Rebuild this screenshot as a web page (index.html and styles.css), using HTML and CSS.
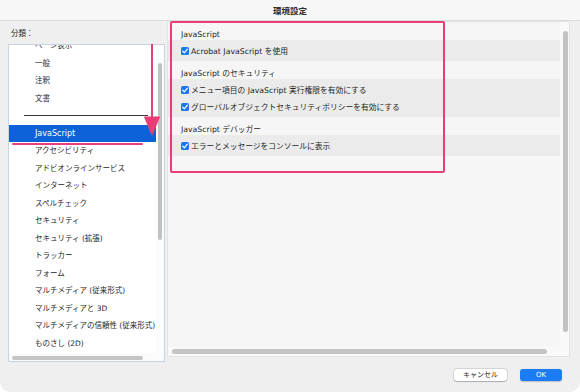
FILE: index.html
```html
<!DOCTYPE html>
<html lang="ja">
<head>
<meta charset="utf-8">
<title>環境設定</title>
<link rel="stylesheet" href="styles.css">
</head>
<body>
<div class="window">
  <div class="titlebar">環境設定</div>
  <div class="main">
    <div class="sidebar">
      <div class="label">分類：</div>
      <div class="listbox">
        <div class="list">
          <div class="item first">ページ表示</div>
          <div class="item">一般</div>
          <div class="item">注釈</div>
          <div class="item">文書</div>
          <div class="sep"><span></span></div>
          <div class="item selected">JavaScript</div>
          <div class="item">アクセシビリティ</div>
          <div class="item">アドビオンラインサービス</div>
          <div class="item">インターネット</div>
          <div class="item">スペルチェック</div>
          <div class="item">セキュリティ</div>
          <div class="item">セキュリティ (拡張)</div>
          <div class="item">トラッカー</div>
          <div class="item">フォーム</div>
          <div class="item">マルチメディア (従来形式)</div>
          <div class="item">マルチメディアと 3D</div>
          <div class="item">マルチメディアの信頼性 (従来形式)</div>
          <div class="item">ものさし (2D)</div>
        </div>
        <div class="list-vtrack"><div class="list-vthumb"></div></div>
        <div class="list-htrack"><div class="list-hthumb"></div></div>
      </div>
    </div>
    <div class="panel">
      <div class="content">
        <div class="heading">JavaScript</div>
        <div class="band">
          <div class="option"><svg class="check" viewBox="0 0 8 8"><rect width="8" height="8" rx="1.6" fill="#1f75ee"/><path d="M1.7 4.1 L3.3 5.9 L6.4 2.1" fill="none" stroke="#fff" stroke-width="1.2" stroke-linecap="round" stroke-linejoin="round"/></svg>Acrobat JavaScript を使用</div>
        </div>
        <div class="heading">JavaScript のセキュリティ</div>
        <div class="band">
          <div class="option"><svg class="check" viewBox="0 0 8 8"><rect width="8" height="8" rx="1.6" fill="#1f75ee"/><path d="M1.7 4.1 L3.3 5.9 L6.4 2.1" fill="none" stroke="#fff" stroke-width="1.2" stroke-linecap="round" stroke-linejoin="round"/></svg>メニュー項目の JavaScript 実行権限を有効にする</div>
          <div class="option"><svg class="check" viewBox="0 0 8 8"><rect width="8" height="8" rx="1.6" fill="#1f75ee"/><path d="M1.7 4.1 L3.3 5.9 L6.4 2.1" fill="none" stroke="#fff" stroke-width="1.2" stroke-linecap="round" stroke-linejoin="round"/></svg>グローバルオブジェクトセキュリティポリシーを有効にする</div>
        </div>
        <div class="heading">JavaScript デバッガー</div>
        <div class="band">
          <div class="option"><svg class="check" viewBox="0 0 8 8"><rect width="8" height="8" rx="1.6" fill="#1f75ee"/><path d="M1.7 4.1 L3.3 5.9 L6.4 2.1" fill="none" stroke="#fff" stroke-width="1.2" stroke-linecap="round" stroke-linejoin="round"/></svg>エラーとメッセージをコンソールに表示</div>
        </div>
      </div>
      <div class="panel-vtrack"><div class="panel-vthumb"></div></div>
      <div class="panel-htrack"><div class="panel-hthumb"></div></div>
    </div>
  </div>
  <div class="footer">
    <button class="btn">キャンセル</button>
    <button class="btn primary">OK</button>
  </div>
  <div class="highlight-box"></div>
  <svg class="arrow" viewBox="0 0 20 100" width="20" height="100">
    <line x1="10" y1="0" x2="10" y2="76" stroke="#ea3d78" stroke-width="2" stroke-linecap="round"/>
    <path d="M2.5 73 L17.5 73 L10 91 Z" fill="#ea3d78" stroke="#ea3d78" stroke-width="1" stroke-linejoin="round"/>
  </svg>
  <div class="underline"></div>
</div>
</body>
</html>
```
FILE: styles.css
```css
* { box-sizing: border-box; }
html, body { margin: 0; padding: 0; background: #ffffff; }
body {
  font-family: "DejaVu Sans", "Noto Sans CJK JP", sans-serif;
  color: #262626;
}
.window {
  position: relative;
  width: 580px;
  height: 392px;
  background: #efefef;
  border-radius: 0 0 10px 10px;
  overflow: hidden;
}
.titlebar {
  height: 21px;
  background: #f7f7f7;
  border-bottom: 1px solid #dcdcdc;
  display: flex;
  align-items: center;
  justify-content: center;
  font-size: 8.5px;
  font-weight: bold;
  color: #2a2a2a;
}
.main {
  display: flex;
  align-items: flex-start;
  gap: 2px;
  height: 336px;
  padding: 0 10px 0 8px;
}
.sidebar { width: 157px; flex: none; }
.label {
  height: 23px;
  padding: 8px 0 0 3px;
  font-size: 7.5px;
  line-height: 10px;
}
.listbox {
  height: 318px;
  background: #ffffff;
  border: 1px solid #c9d3e4;
  display: grid;
  grid-template-columns: 147px 8px;
  grid-template-rows: 1fr 8px;
}
.list {
  overflow: hidden;
  font-size: 7.5px;
}
.item {
  height: 17.5px;
  line-height: 17.5px;
  padding-left: 26px;
  white-space: nowrap;
}
.item.first { margin-top: -8px; }
.item.selected {
  background: #0d62d9;
  color: #ffffff;
  font-size: 8px;
}
.sep {
  height: 17.5px;
  display: flex;
  align-items: center;
  padding: 0 8px 0 15px;
}
.sep span {
  display: block;
  width: 100%;
  height: 1px;
  background: #3a3a3a;
}
.list-vtrack { background: #fbfbfb; }
.list-vthumb {
  margin: 18px 0 0 2px;
  width: 4px;
  height: 177px;
  border-radius: 2px;
  background: #c2c2c2;
}
.list-htrack { grid-column: 1 / 3; background: #fbfbfb; }
.list-hthumb {
  margin: 3px 0 0 3px;
  width: 131px;
  height: 4px;
  border-radius: 2px;
  background: #c4c4c4;
}
.panel {
  width: 403px;
  height: 336px;
  border: 1px solid #e3e3e3;
  display: grid;
  grid-template-columns: 392px 9px;
  grid-template-rows: 325px 9px;
  background: #f9f9f9;
}
.content {
  background: #f6f6f6;
  overflow: hidden;
  font-size: 7.75px;
}
.heading {
  height: 18px;
  padding: 7px 0 0 13px;
  line-height: 11px;
  white-space: nowrap;
}
.band {
  background: #ebebeb;
  padding: 2px 0;
}
.option {
  height: 17px;
  display: flex;
  align-items: center;
  gap: 2px;
  padding-left: 13px;
  white-space: nowrap;
}
.check { width: 8px; height: 8px; flex: none; }
.panel-vthumb {
  margin: 9px 0 0 3px;
  width: 5px;
  height: 301px;
  border-radius: 2.5px;
  background: #c2c2c2;
}
.panel-htrack { grid-column: 1 / 3; }
.panel-hthumb {
  margin: 2px 0 0 4px;
  width: 375px;
  height: 5px;
  border-radius: 2.5px;
  background: #c4c4c4;
}
.footer {
  display: flex;
  justify-content: flex-end;
  gap: 13px;
  padding-right: 18px;
  margin-top: 12px;
}
.btn {
  height: 12px;
  padding: 0;
  border: none;
  border-radius: 3px;
  font-family: "DejaVu Sans", "Noto Sans CJK JP", sans-serif;
  font-size: 7px;
  line-height: 12px;
  color: #262626;
  background: #ffffff;
  box-shadow: 0 0 0 0.5px rgba(0,0,0,0.18), 0 0.5px 1px rgba(0,0,0,0.2);
  width: 53px;
}
.btn.primary {
  width: 42px;
  background: #1b7cf4;
  color: #ffffff;
  box-shadow: 0 0.5px 1px rgba(0,0,0,0.2);
}
.highlight-box {
  position: absolute;
  left: 170px;
  top: 21px;
  width: 275px;
  height: 152px;
  border: 2px solid #ea3d78;
  border-radius: 2px;
}
.arrow {
  position: absolute;
  left: 142px;
  top: 44px;
}
.underline {
  position: absolute;
  left: 12px;
  top: 143px;
  width: 131px;
  height: 2px;
  border-radius: 1px;
  background: #ea3d78;
}
```
